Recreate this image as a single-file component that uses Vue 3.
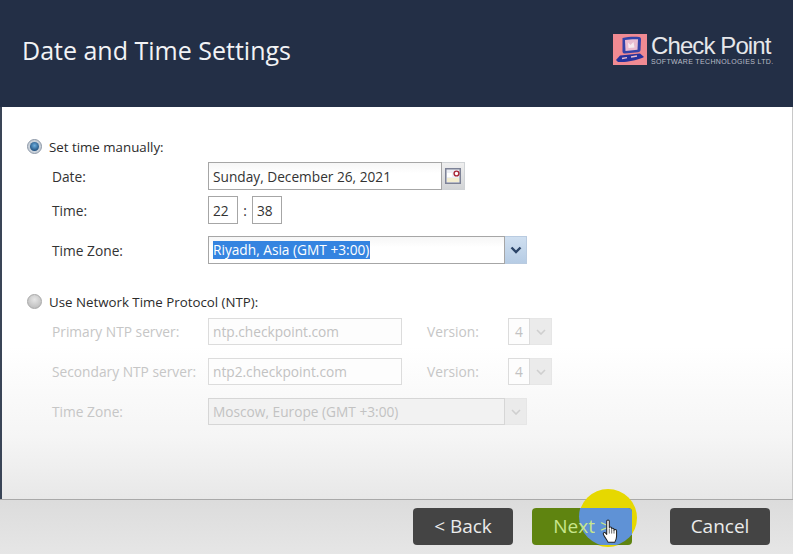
<script setup>
const ntpRows = [
  { label: 'Primary NTP server:', value: 'ntp.checkpoint.com' },
  { label: 'Secondary NTP server:', value: 'ntp2.checkpoint.com' },
]
</script>

<template>
  <div class="page">
    <header class="head">
      <h1 class="title">Date and Time Settings</h1>
      <div class="logo">
        <svg class="logo-mark" viewBox="0 0 34 31" width="34" height="31">
          <rect width="34" height="31" fill="#f08a92" />
          <path d="M9.500 4 C14 2.800 22 2.500 26 3 C27.500 3.300 28 4 28 5.500 L27.500 16 C27.400 17.500 26.500 18 25 18.200 L12 19.500 C10.500 19.600 9.700 19 9.500 17.500 Z" fill="#3343a8" />
          <path d="M12 6 C16 5.200 21 5 25 5.200 L24.500 15.800 L12.500 17 Z" fill="#e9bcd0" />
          <path d="M15 8.500 L17.500 11 L20.500 8 L21.500 13.500 L15.500 14 Z" fill="#f6eaf0" />
          <path d="M3 26 L7 21.500 L27 19.500 L31 23 C26 25.500 18 27.500 11 28 L5 28 Z" fill="#26329c" />
          <path d="M9 24.500 L14 23.600 M18 23 L24 22" stroke="#e9bcd0" stroke-width="1.300" />
        </svg>
        <div class="logo-text">
          <div class="logo-name">Check Point</div>
          <div class="logo-sub">SOFTWARE TECHNOLOGIES LTD.</div>
        </div>
      </div>
    </header>

    <main class="panel">
      <div class="radio-row">
        <span class="radio on"><span class="dot"></span></span>
        <span class="radio-label">Set time manually:</span>
      </div>

      <div class="row row-date">
        <label class="lbl">Date:</label>
        <div class="field date-field">Sunday, December 26, 2021</div>
        <div class="cal-btn">
          <svg width="16" height="16" viewBox="0 0 16 16">
            <rect x="0.750" y="0.750" width="14.500" height="14.500" fill="#eceef4" stroke="#7d8296" stroke-width="1.500" />
            <rect x="2" y="5" width="5" height="4" fill="#fff" />
            <rect x="2" y="10" width="12" height="4" fill="#f3edd0" />
            <circle cx="11.500" cy="5.500" r="2.400" fill="#fff" stroke="#a82436" stroke-width="1.400" />
          </svg>
        </div>
      </div>

      <div class="row row-time">
        <label class="lbl">Time:</label>
        <div class="field time-field">22</div>
        <span class="colon">:</span>
        <div class="field time-field">38</div>
      </div>

      <div class="row row-zone">
        <label class="lbl">Time Zone:</label>
        <div class="field zone-field"><span class="selected">Riyadh, Asia (GMT +3:00)</span></div>
        <div class="arrow-btn">
          <svg width="12" height="8" viewBox="0 0 12 8">
            <path d="M1.500 1.500 L6 6 L10.500 1.500" fill="none" stroke="#2b4468" stroke-width="2.400" />
          </svg>
        </div>
      </div>

      <div class="radio-row second">
        <span class="radio"></span>
        <span class="radio-label">Use Network Time Protocol (NTP):</span>
      </div>

      <div v-for="r in ntpRows" :key="r.label" class="row row-ntp">
        <label class="lbl off">{{ r.label }}</label>
        <div class="field off-field ntp-field">{{ r.value }}</div>
        <span class="lbl off version">Version:</span>
        <div class="field off-field ver-field">4</div>
        <div class="arrow-btn off-arrow">
          <svg width="10" height="6" viewBox="0 0 10 6">
            <path d="M1 1 L5 5 L9 1" fill="none" stroke="#cfcfcf" stroke-width="1.600" />
          </svg>
        </div>
      </div>

      <div class="row row-ntp">
        <label class="lbl off">Time Zone:</label>
        <div class="field off-field zone-field">Moscow, Europe (GMT +3:00)</div>
        <div class="arrow-btn off-arrow">
          <svg width="10" height="6" viewBox="0 0 10 6">
            <path d="M1 1 L5 5 L9 1" fill="none" stroke="#cfcfcf" stroke-width="1.600" />
          </svg>
        </div>
      </div>
    </main>

    <footer class="foot">
      <span class="halo"></span>
      <button class="btn">&lt; Back</button>
      <button class="btn next">
        <span class="next-blue"></span>
        <span class="next-text">Next &gt;</span>
      </button>
      <button class="btn">Cancel</button>
      <svg class="hand" width="18" height="24" viewBox="0 0 20 28">
        <path d="M5 2.500 C5 0.800 8 0.800 8 2.500 L8 10 C8 9 10.800 9 10.800 10.500 L10.800 11.500 C10.800 10.500 13.500 10.500 13.500 12 L13.500 13 C13.500 12 16.500 12 16.500 14 L16.500 20 C16.500 23 15.500 25 14.500 27 L6.500 27 C5.500 24.500 3 22 1.200 18 C0.300 16 2.500 15 3.800 16.500 L5 18 Z" fill="#fff" stroke="#222" stroke-width="1.200" stroke-linejoin="round" />
        <path d="M8 11 L8 17 M10.800 12 L10.800 17 M13.500 13 L13.500 17" stroke="#222" stroke-width="0.800" />
      </svg>
    </footer>
  </div>
</template>

<style>
html, body { margin: 0; padding: 0; }
</style>

<style scoped>
.page {
  width: 793px;
  height: 554px;
  overflow: hidden;
  display: flex;
  flex-direction: column;
  font-family: "Open Sans", sans-serif;
  font-size: 13.700px;
  color: #333;
}
.head {
  height: 107px;
  flex: none;
  box-sizing: border-box;
  background: #232f46;
  display: flex;
  justify-content: space-between;
  padding: 34px 21px 0 22px;
}
.title {
  margin: -1px 0 0;
  font-size: 25px;
  font-weight: 400;
  line-height: 34px;
  color: #f2f3f5;
}
.logo { display: flex; gap: 4px; align-items: flex-start; }
.logo-mark { display: block; }
.logo-text { color: #e6e7ea; font-family: "Liberation Sans", sans-serif; width: 121px; }
.logo-name { font-size: 24px; line-height: 24px; letter-spacing: -0.900px; white-space: nowrap; }
.logo-sub { font-size: 7px; line-height: 8px; white-space: nowrap; color: #b9bdc6; letter-spacing: 0.350px; }

.panel {
  height: 392px;
  flex: none;
  box-sizing: border-box;
  border-left: 2px solid #3a4557;
  border-right: 1px solid #c8c8c8;
  background: linear-gradient(#fff 0, #fff 240px, #f5f5f5 330px, #e8e8e8 100%);
  padding: 32px 0 0 25px;
}
.radio-row { display: flex; align-items: center; height: 15px; gap: 7px; }
.radio-row.second { margin-top: 30px; }
.radio {
  width: 15px;
  height: 15px;
  flex: none;
  box-sizing: border-box;
  border-radius: 50%;
  background: radial-gradient(circle at 50% 35%, #e6e6e6, #b4b4b4);
  border: 1px solid #a8a8a8;
  display: flex;
  align-items: center;
  justify-content: center;
}
.radio.on { background: #c9d1da; border-color: #8e99a8; }
.dot {
  width: 9px;
  height: 9px;
  border-radius: 50%;
  background: radial-gradient(circle at 50% 40%, #6fb0e0, #1f4f7e 75%);
}
.radio-label { color: #2b2b2b; font-size: 13.300px; line-height: 15px; white-space: nowrap; padding-top: 1px; }

.row { display: flex; align-items: center; padding-left: 25px; position: relative; }
.row-date { margin-top: 8px; height: 28px; }
.row-time { margin-top: 6px; height: 28px; }
.row-zone { margin-top: 12px; height: 28px; }
.row-ntp { margin-top: 13px; height: 27px; }
.radio-row.second + .row-ntp { margin-top: 9px; }
.lbl { width: 156px; flex: none; white-space: nowrap; font-size: 13.750px; color: #333; }
.lbl.off { color: #c6c6c6; }
.field {
  box-sizing: border-box;
  height: 100%;
  border: 1px solid #a6a6a6;
  background: #fff;
  padding-left: 4px;
  display: flex;
  align-items: center;
  white-space: nowrap;
  font-size: 13.700px;
}
.date-field { width: 234px; background: linear-gradient(#f6f6f6, #fff 40%); }
.cal-btn {
  width: 23px;
  height: 28px;
  box-sizing: border-box;
  border: 1px solid #d0d3d6;
  border-left: 0;
  background: linear-gradient(#efefef, #d2d4d6);
  display: flex;
  align-items: center;
  justify-content: center;
}
.time-field { width: 30px; }
.colon { width: 14px; text-align: center; font-size: 13.700px; }
.zone-field { width: 297px; background: linear-gradient(#f6f6f6, #fff 40%); }
.selected { background: #3584e0; color: #fff; line-height: 18px; padding-right: 1px; }
.arrow-btn {
  width: 22px;
  height: 100%;
  box-sizing: border-box;
  border: 1px solid #b9cbe0;
  border-left: 0;
  background: linear-gradient(#cfdff0, #b6cce4);
  display: flex;
  align-items: center;
  justify-content: center;
}
.off-field { border-color: #dcdcdc; color: #c2c2c2; background: #fdfdfd; }
.ntp-field { width: 194px; }
.version { width: 81px; margin-left: 25px; }
.ver-field { width: 22px; padding-left: 6px; }
.off-arrow { background: #ebebeb; border-color: #e6e6e6; }
.row-ntp .zone-field.off-field { background: #f2f2f2; border-color: #d6d6d6; }

.foot {
  flex: 1;
  position: relative;
  box-sizing: border-box;
  border-top: 1px solid #a9a9a9;
  background: linear-gradient(#dcdcdc, #e6e6e6);
  display: flex;
  align-items: flex-start;
  padding: 8px 23px 0 413px;
  gap: 19px;
}
.halo {
  position: absolute;
  left: 579px;
  top: -11px;
  width: 58px;
  height: 58px;
  border-radius: 50%;
  background: #e6d800;
}
.btn {
  position: relative;
  width: 100px;
  height: 37px;
  margin: 0;
  padding: 0 0 2px;
  border: 0;
  border-radius: 4px;
  background: #444;
  color: #ebebeb;
  font-family: "Open Sans", sans-serif;
  font-size: 19px;
  overflow: hidden;
}
.btn:last-of-type { margin-left: 19px; }
.next { background: #5f8410; color: #c8e68c; }
.next-blue {
  position: absolute;
  left: 47px;
  top: -21px;
  width: 59px;
  height: 59px;
  border-radius: 50%;
  background: #5f92d6;
}
.next-text { position: relative; }
.hand { position: absolute; left: 602px; top: 19px; }
</style>
